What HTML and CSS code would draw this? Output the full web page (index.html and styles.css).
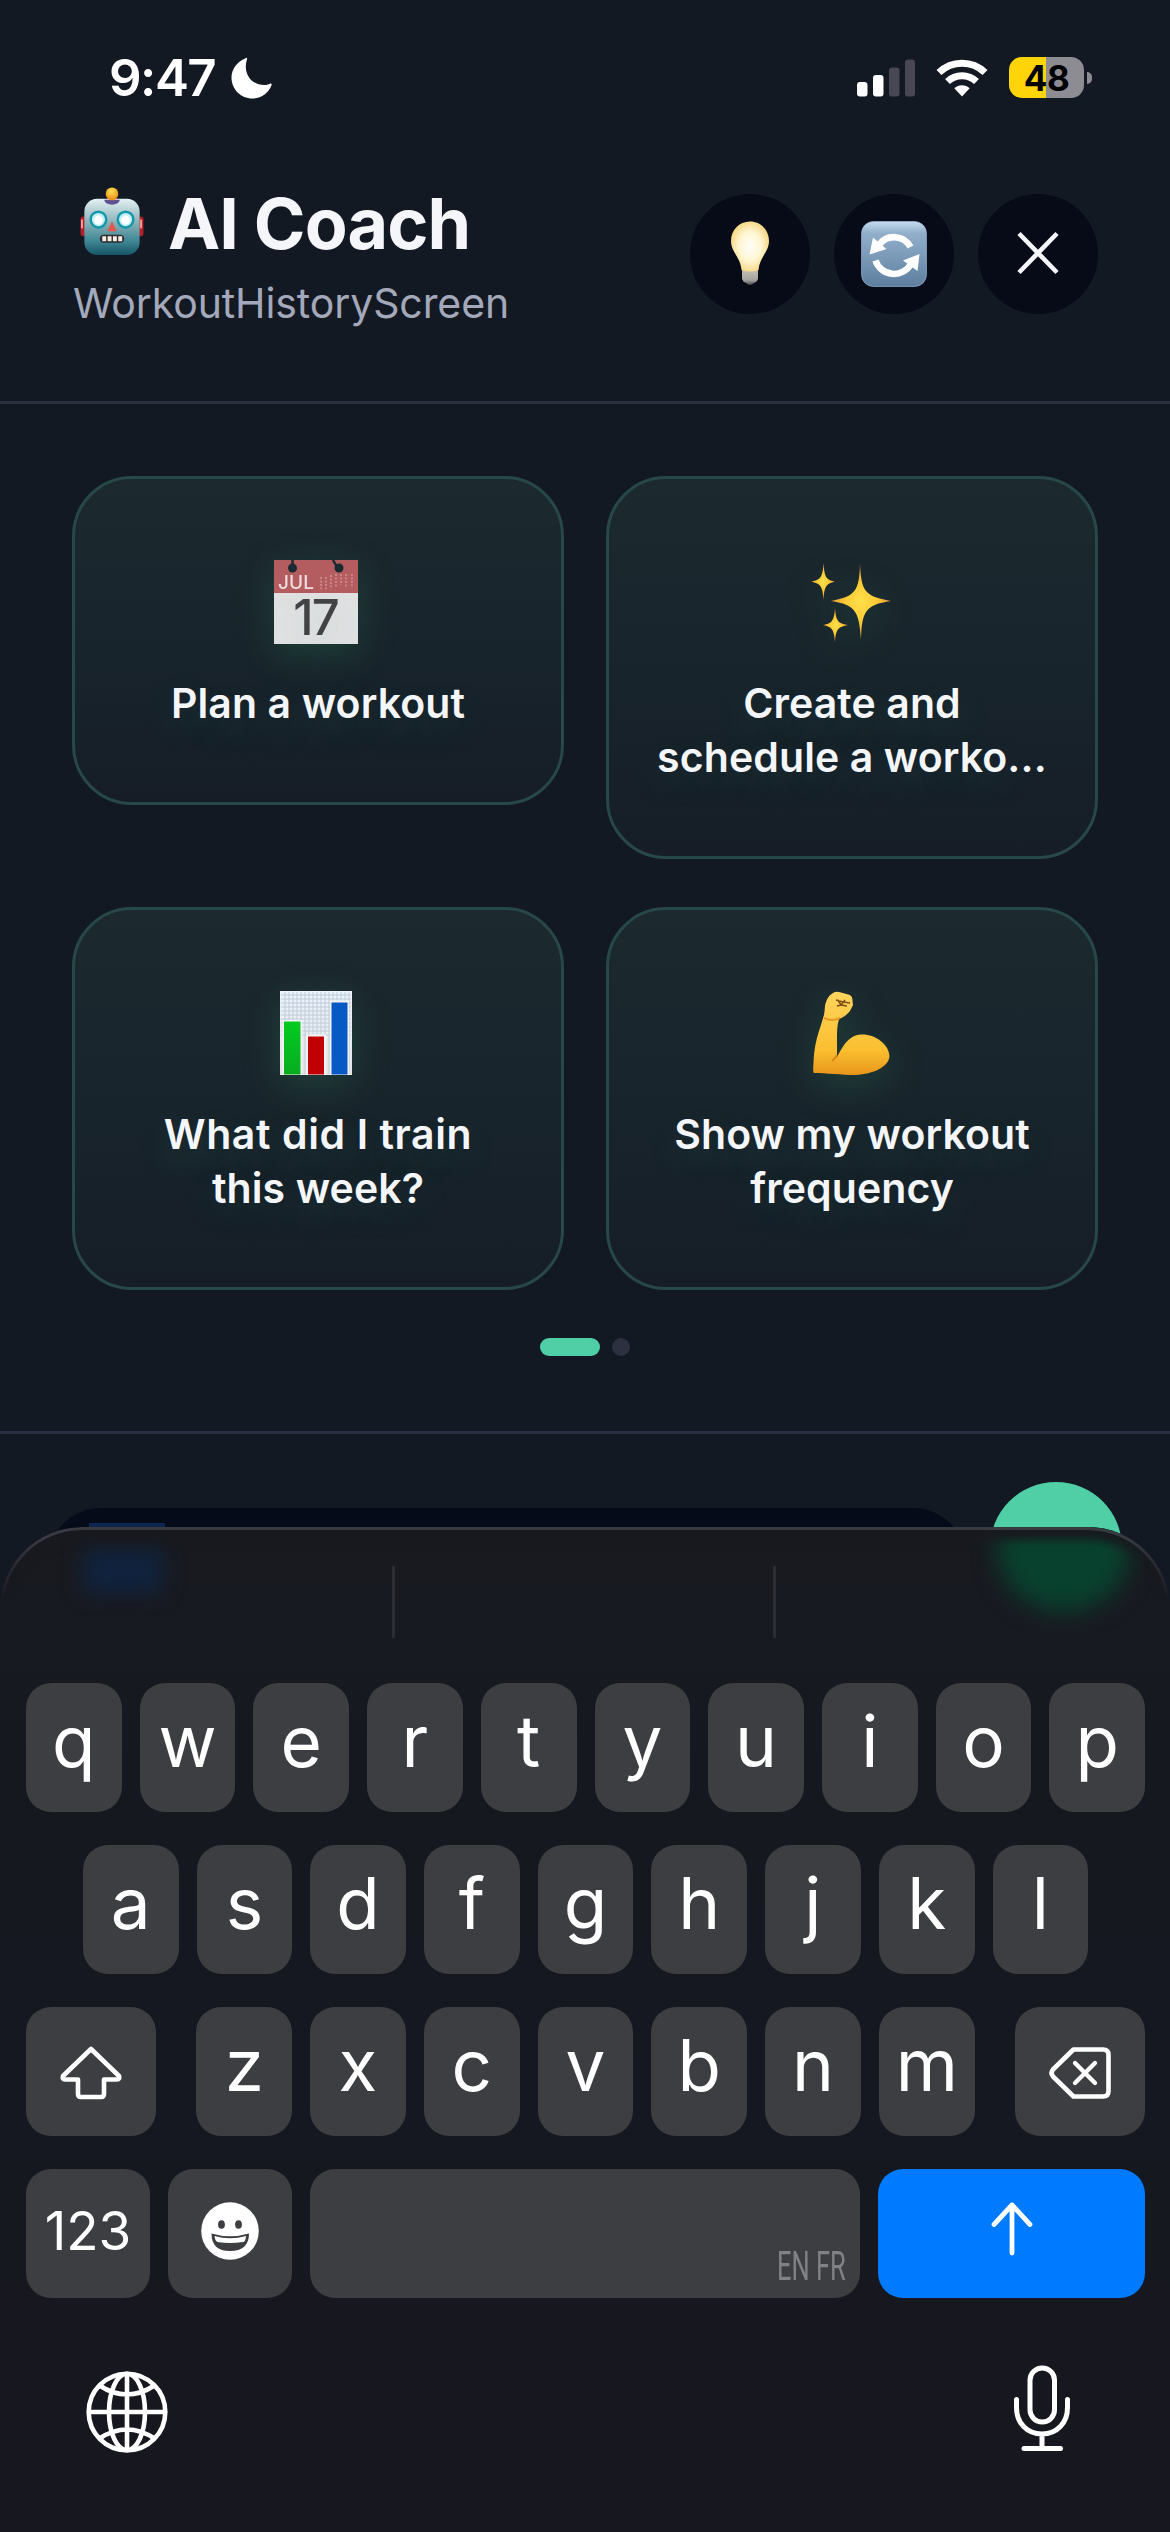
FILE: index.html
```html
<!DOCTYPE html>
<html lang="en">
<head>
<meta charset="utf-8">
<title>AI Coach</title>
<link rel="stylesheet" href="styles.css">
</head>
<body>
<div class="screen">
  <div class="status">
    <span class="time">9:47</span>
    <svg class="moon" width="41" height="42" viewBox="0 0 41 42"><path d="M14.600 1.200C15.600.4 16.400 1 16 2.200C11.500 15.500 20 28.500 34 28C36 27.900 37.500 27.300 39 26.700C40.300 26.300 41 27 40.500 28.300C37.500 36.300 30 41.500 21.500 41.500C9.800 41.500.5 32.300.5 20.500C.5 12.300 6 4.500 14.600 1.200Z" fill="#fff"/></svg>
    <div class="status-right">
      <svg width="58" height="38" viewBox="0 0 58 38"><rect x="0" y="23" width="10.500" height="14.500" rx="3" fill="#fff"/><rect x="16" y="16" width="10.500" height="21.500" rx="3" fill="#fff"/><rect x="32" y="8.500" width="10.500" height="29" rx="3" fill="#474854"/><rect x="48" y="0.500" width="10" height="37" rx="3" fill="#474854"/></svg>
      <svg class="wifi" width="52" height="38" viewBox="0 0 52 38"><g fill="none" stroke="#fff" stroke-width="7"><path d="M3 13.500A33 33 0 0 1 49 13.500"/><path d="M11.500 22.500A21 21 0 0 1 40.500 22.500"/></g><path d="M18.300 29.300A11 11 0 0 1 33.700 29.300L26 37.500Z" fill="#fff"/></svg>
      <div class="battery"><span>48</span></div>
      <div class="nub"></div>
    </div>
  </div>

  <header class="header">
    <div class="heading">
      <h1>
        <svg class="robot" width="64" height="69" viewBox="0 0 66 70" preserveAspectRatio="none">
          <defs><linearGradient id="rb" x1="0" y1="0" x2="0" y2="1"><stop offset="0" stop-color="#e2f1f3"/><stop offset=".4" stop-color="#8fb4ba"/><stop offset=".75" stop-color="#3f8795"/><stop offset="1" stop-color="#155466"/></linearGradient>
          <radialGradient id="ball" cx=".45" cy=".3" r=".7"><stop offset="0" stop-color="#ffe25a"/><stop offset="1" stop-color="#ed8a12"/></radialGradient></defs>
          <rect x="0.500" y="30" width="8" height="20" rx="3" fill="#b01f26"/><rect x="57.500" y="30" width="8" height="20" rx="3" fill="#b01f26"/>
          <rect x="1" y="33" width="2" height="9" fill="#f79a9a"/><rect x="62" y="33" width="2" height="9" fill="#f79a9a"/>
          <rect x="4.500" y="12" width="57" height="57" rx="13" fill="url(#rb)"/>
          <path d="M25 13A8 5 0 0 0 41 13Z" fill="#60528f"/><circle cx="33" cy="7" r="6.500" fill="url(#ball)"/>
          <circle cx="19" cy="33" r="8" fill="#c4eff5" stroke="#1597aa" stroke-width="2.500"/><circle cx="47" cy="33" r="8" fill="#c4eff5" stroke="#1597aa" stroke-width="2.500"/>
          <circle cx="19" cy="33.500" r="4.500" fill="#fff"/><circle cx="47" cy="33.500" r="4.500" fill="#fff"/>
          <path d="M33 35L38 45H28Z" fill="#e2564c"/>
          <rect x="20.500" y="48.500" width="25" height="8" rx="4" fill="#2b2c30"/><path d="M23 50h4v5h-4zM28.500 50h4v5h-4zM34 50h4v5h-4zM39.500 50h4v5h-4z" fill="#f6efe4"/>
        </svg>
        <span>AI Coach</span>
      </h1>
      <p class="subtitle">WorkoutHistoryScreen</p>
    </div>
    <div class="actions">
      <button class="round" aria-label="Tips">
        <svg width="40" height="66" viewBox="0 0 40 66"><defs><radialGradient id="bulb" cx=".5" cy=".5" r=".58"><stop offset="0" stop-color="#fffefa"/><stop offset=".5" stop-color="#fff6d2"/><stop offset="1" stop-color="#f3cf71"/></radialGradient><linearGradient id="sock" x1="0" y1="0" x2="0" y2="1"><stop offset="0" stop-color="#c9c2b5"/><stop offset=".7" stop-color="#a5a39f"/><stop offset="1" stop-color="#444"/></linearGradient></defs>
        <path d="M12 48H28V58Q27 61 24 62Q20 66 16 62Q13 61 12 58Z" fill="url(#sock)"/><path d="M20 .5C31 .5 39 9 39 20C39 31 29.500 36 28.500 49Q20 52 11.500 49C10.500 36 1 31 1 20C1 9 9 .5 20 .5Z" fill="url(#bulb)"/></svg>
      </button>
      <button class="round" aria-label="Refresh">
        <svg width="66" height="66" viewBox="0 0 66 66"><defs><linearGradient id="rf" x1="0" y1="0" x2="0" y2="1"><stop offset="0" stop-color="#c3dcf0"/><stop offset=".18" stop-color="#91afcb"/><stop offset="1" stop-color="#5d7f9f"/></linearGradient></defs>
        <rect x=".5" y=".5" width="65" height="65" rx="12" fill="url(#rf)" stroke="#a5c2da" stroke-opacity=".6"/>
        <g fill="none" stroke="#fff" stroke-width="6.500"><path d="M18 24A18.500 18.500 0 0 1 49.500 26"/><path d="M14.500 39.500A19.500 19.500 0 0 0 50 43"/></g>
        <path d="M12 16.500L8.500 33.500L25.500 28Z" fill="#fff"/><path d="M58.500 33L42 39.500L56.500 50Z" fill="#fff"/></svg>
      </button>
      <button class="round" aria-label="Close">
        <svg class="close" width="44" height="44" viewBox="0 0 44 44"><path d="M3 2.500L41 41.500M41 2.500L3 41.500" stroke="#f5f6fa" stroke-width="4.600" fill="none"/></svg>
      </button>
    </div>
  </header>

  <main class="quick">
    <div class="grid">
      <div class="card">
        <svg class="glow nudge" width="84" height="84" viewBox="0 0 84 84"><path d="M0 0H84V34H0Z" fill="#b45d60"/><path d="M0 33H84V84H0Z" fill="#e0e0e1"/><path d="M18.500 0V6M59 0L63 7" stroke="#182b30" stroke-width="2.500"/><circle cx="18.500" cy="8" r="4.500" fill="#182b30"/><circle cx="65" cy="8" r="4.500" fill="#182b30"/>
        <g stroke="#d58f90" stroke-width="1.600" stroke-dasharray="2 1.500"><path d="M47 17V29M52 17V29M57 15V29M62 14V28M67 14V25M72 14V27M78 14V26"/></g>
        <text x="4" y="28.500" class="cal-month">JUL</text><text x="41.500" y="75" class="cal-day" text-anchor="middle">17</text></svg>
        <p>Plan a workout</p>
      </div>
      <div class="card">
        <svg class="glow" width="84" height="84" viewBox="0 0 84 84"><defs><radialGradient id="st"><stop offset="0" stop-color="#ffe04b"/><stop offset=".5" stop-color="#fdcb35"/><stop offset="1" stop-color="#e59a39"/></radialGradient></defs><g fill="url(#st)"><path d="M50 4C51.500 31 54 36 81 41C55 45 52 51 51 80C49 51 46 45 21 41C46 36 49 31 50 4Z"/><path d="M13.500 3C14.500 17 16 20 25 21.500C16 24 14.500 26 13.500 40C12.500 26 11 24 1 21.500C11 20 12.500 17 13.500 3Z"/><path d="M25 48C26 61 28 63.500 38 65C28 67 26 69 25 82C24 69 22 67 13 65C22 63.500 24 61 25 48Z"/></g></svg>
        <p>Create and<br>schedule a worko...</p>
      </div>
      <div class="card">
        <svg class="glow nudge" width="84" height="84" viewBox="0 0 84 84"><defs><linearGradient id="cb" x1="0" y1="0" x2="0" y2="1"><stop offset="0" stop-color="#eef3fa"/><stop offset="1" stop-color="#e4e4e6"/></linearGradient><linearGradient id="gr" x1="0" y1="0" x2="0" y2="1"><stop offset="0" stop-color="#02cb20"/><stop offset="1" stop-color="#08ad20"/></linearGradient></defs><rect x="6" y="0" width="72" height="84" fill="url(#cb)"/><path d="M11 1V83M15 1V83M19 1V83M23 1V83M27 1V83M31 1V83M35 1V83M39 1V83M43 1V83M47 1V83M51 1V83M55 1V83M59 1V83M63 1V83M67 1V83M71 1V83M75 1V83M7 4H77M7 8H77M7 12H77M7 16H77M7 20H77M7 24H77M7 28H77M7 32H77M7 36H77M7 40H77M7 44H77" stroke="#b9c9d8" stroke-width=".9"/><path d="M8.500 29H28V84H8.500ZM32 43.500H52V84H32ZM56 9.500H75V84H56Z" fill="#f4f4f8"/><rect x="10" y="30.500" width="16.500" height="53" fill="url(#gr)"/><rect x="34" y="45.500" width="16" height="38" fill="#c00003"/><rect x="57.500" y="11.500" width="16" height="72" fill="#0759c4"/></svg>
        <p><span class="loose">What did I train</span><br>this week?</p>
      </div>
      <div class="card">
        <svg class="glow" width="84" height="84" viewBox="0 0 84 84"><defs><linearGradient id="arm" x1="0" y1="0" x2="0" y2="1"><stop offset="0" stop-color="#ffd45c"/><stop offset=".7" stop-color="#fbbf30"/><stop offset="1" stop-color="#e8951b"/></linearGradient></defs><path d="M4 82C2.500 80 3.500 76 3.500 71C4 59 6 49 9 40C11 34 12 31 13 27C14.500 23 14.500 20 15 15C16 9 19 4 23 2Q26 0 31 1.500L40 4Q43 6 42.500 10L43 14L40 20Q35 26 29 28C27 34 27 41 27 49V66C32 57 38 44 51 43.500C66 43 79 54 79.500 65C79 76 63 83 46 84C31 84 16 82 4 82Z" fill="url(#arm)"/><path d="M27 64Q25 68 22 70" fill="none" stroke="#d68519" stroke-width="2"/><path d="M14 27Q22 31 30 27" fill="none" stroke="#e59b20" stroke-width="2"/><path d="M26 9L33 11L40 12M28 9L31 14L37 15M27 15L31 14L35 9" fill="none" stroke="#805013" stroke-width="1.500"/></svg>
        <p>Show my workout<br>frequency</p>
      </div>
    </div>
    <div class="dots"><i class="on"></i><i></i></div>
  </main>

  <div class="composer">
    <div class="input"><span class="selection"></span></div>
    <div class="send"></div>
  </div>

  <section class="keyboard">
    <div class="shade shade-blue"></div>
    <div class="shade shade-green"></div>
    <div class="suggest"><i></i><i></i></div>
    <div class="rows">
      <div class="row"><b>q</b><b>w</b><b>e</b><b>r</b><b>t</b><b>y</b><b>u</b><b>i</b><b>o</b><b>p</b></div>
      <div class="row row-mid"><b>a</b><b>s</b><b>d</b><b>f</b><b>g</b><b>h</b><b>j</b><b>k</b><b>l</b></div>
      <div class="row">
        <b class="wide left"><svg width="62" height="54" viewBox="0 0 62 54"><path d="M31 3L59 30Q60 33.500 57 33.500H44V48Q44 51 41 51H21Q18 51 18 48V33.500H5Q2 33.500 3 30Z" fill="none" stroke="#fff" stroke-width="4.600" stroke-linejoin="round"/></svg></b>
        <b>z</b><b>x</b><b>c</b><b>v</b><b>b</b><b>n</b><b>m</b>
        <b class="wide right"><svg width="62" height="54" viewBox="0 0 62 54"><path d="M24.500 3.500H54Q59.500 3.500 59.500 9V45Q59.500 50.500 54 50.500H24.500L4 30.500Q1 27 4 23.500Z" fill="none" stroke="#fff" stroke-width="4.600" stroke-linejoin="round"/><path d="M26 17L46 37M46 17L26 37" stroke="#fff" stroke-width="4.300" stroke-linecap="round"/></svg></b>
      </div>
      <div class="row">
        <b class="num">123</b>
        <b class="emoji"><svg width="58" height="58" viewBox="0 0 58 58"><circle cx="29" cy="29" r="28.800" fill="#fff"/><ellipse cx="20.500" cy="22.500" rx="3.400" ry="4.300" fill="#3c3e42"/><ellipse cx="37.500" cy="22.500" rx="3.400" ry="4.300" fill="#3c3e42"/><path d="M10.500 31.500Q29 37 48 31.500Q48 49 29 49Q10.500 49 10.500 31.500Z" fill="#3c3e42"/><path d="M13.500 34Q29 38.500 45 34Q44.500 40 42 40Q29 42 16.500 40Q14 39 13.500 34Z" fill="#fff"/></svg></b>
        <b class="space"><span>EN FR</span></b>
        <b class="go"><svg width="44" height="54" viewBox="0 0 44 54"><path d="M22 51V3M4 22.500L22 3L40 22.500" fill="none" stroke="#fff" stroke-width="4.800" stroke-linecap="round" stroke-linejoin="round"/></svg></b>
      </div>
    </div>
    <div class="bottom">
      <svg width="82" height="82" viewBox="0 0 82 82"><g fill="none" stroke="#fff" stroke-width="4.600"><circle cx="41" cy="41" r="38.300"/><ellipse cx="41" cy="41" rx="18" ry="38.300"/><path d="M41 2.500V79.500M2.500 41H79.500M13.500 14.500Q41 32.500 68.500 14.500M13.500 67.500Q41 49.500 68.500 67.500"/></g></svg>
      <svg class="mic" width="58" height="87" viewBox="0 0 58 87"><g fill="none" stroke="#fff" stroke-width="5" stroke-linecap="round"><rect x="17" y="3" width="24.500" height="54" rx="12.250"/><path d="M3.500 34.500V42.500C3.500 58 14 69 29 69S54.500 58 54.500 42.500V34.500M29 69V83.500M11 83.500H47.500"/></g></svg>
    </div>
  </section>
</div>
</body>
</html>
```
FILE: styles.css
```css
* { box-sizing: border-box; }

body {
  margin: 0;
  background: #131923;
  font-family: Inter, "Liberation Sans", sans-serif;
  color: #f5f6fa;
}

h1, p { margin: 0; }

svg { display: block; flex: none; overflow: visible; }

.screen {
  position: relative;
  width: 1170px;
  height: 2532px;
  overflow: hidden;
  background: #131923;
}

/* status bar */
.status {
  display: flex;
  height: 140px;
  padding: 57px 78px 0 109px;
}
.time {
  width: 122px;
  font-size: 51px;
  font-weight: 600;
  line-height: 41px;
  letter-spacing: -1.500px;
  color: #fff;
}
.status-right {
  display: flex;
  align-items: center;
  height: 41px;
  margin-left: auto;
}
.wifi { margin: 0 21px; }
.battery {
  width: 75px;
  height: 41px;
  border-radius: 13px;
  background: linear-gradient(90deg, #ffd409 49%, #8d8c93 49%);
  color: #000;
  font-size: 35px;
  font-weight: 700;
  line-height: 42px;
  letter-spacing: -.5px;
  text-align: center;
}
.nub {
  width: 5px;
  height: 12px;
  margin-left: 3px;
  border-radius: 0 5px 5px 0;
  background: #8d8c93;
}

/* header */
.header {
  display: flex;
  justify-content: space-between;
  height: 264px;
  padding: 0 72px;
  border-bottom: 3px solid #2b3140;
}
.heading { padding-top: 42px; }
h1 {
  display: flex;
  gap: 24px;
  padding-left: 8px;
  font-size: 70px;
  font-weight: 700;
  line-height: 84px;
  letter-spacing: -.9px;
}
.robot { margin-top: 5px; }
.subtitle {
  margin-top: 10px;
  padding-left: 1px;
  font-size: 41px;
  line-height: 54px;
  letter-spacing: -.1px;
  color: #a3a8ba;
}
.actions {
  display: flex;
  gap: 24px;
  padding-top: 54px;
}
.round {
  display: flex;
  align-items: center;
  justify-content: center;
  width: 120px;
  height: 120px;
  padding: 0;
  border: 0;
  border-radius: 50%;
  background: #070b18;
}
.close { margin-bottom: 3px; }

/* suggestions */
.quick {
  height: 1030px;
  padding: 72px 72px 0;
  border-bottom: 3px solid #2a2e42;
}
.grid {
  display: grid;
  grid-template-columns: 1fr 1fr;
  gap: 48px 42px;
  align-items: start;
}
.card {
  display: flex;
  flex-direction: column;
  align-items: center;
  gap: 32px;
  padding: 81px 30px 72px;
  border: 3px solid #274848;
  border-radius: 60px;
  background: linear-gradient(#1c292f, #18242b 55%, #161d27);
  font-size: 41px;
  font-weight: 600;
  line-height: 54px;
  letter-spacing: .1px;
  text-align: center;
  white-space: nowrap;
  text-shadow: 0 12px 36px rgba(80, 208, 168, .16);
}
.loose { letter-spacing: .6px; }
.glow { filter: drop-shadow(0 10px 18px rgba(60, 190, 130, .18)); }
.nudge { margin-right: 4px; }
.cal-month { font-size: 19px; font-weight: 500; fill: #f0dcdc; }
.cal-day { font-size: 49px; font-weight: 500; fill: #434346; letter-spacing: -2px; }
.dots {
  display: flex;
  justify-content: center;
  gap: 12px;
  margin-top: 48px;
}
.dots i {
  width: 18px;
  height: 18px;
  border-radius: 9px;
  background: #2c3040;
}
.dots .on { width: 60px; background: #50cfa7; }

/* message composer */
.composer {
  display: flex;
  align-items: flex-end;
  gap: 24px;
  padding: 48px 48px 0;
}
.input {
  flex: 1;
  height: 106px;
  padding: 15px 41px;
  border-radius: 60px;
  background: #060b19;
}
.selection {
  display: block;
  width: 76px;
  height: 70px;
  background: #0c2750;
}
.send {
  width: 132px;
  height: 132px;
  border-radius: 50%;
  background: #50cfa7;
}

/* keyboard sheet lies over the composer */
.keyboard {
  position: absolute;
  inset: 1527px 0 0;
  overflow: hidden;
  border-radius: 82px 82px 0 0;
  background: linear-gradient(#181a1f, #181a22 12%, #15181f 22%, #151820 60%, #17181f 80%);
}
.keyboard::before {
  content: "";
  position: absolute;
  inset: 0 0 auto;
  z-index: 1;
  height: 110px;
  border: 3px solid #383941;
  border-bottom: 0;
  border-radius: 82px 82px 0 0;
  box-shadow: inset 0 10px 10px #181a1f;
  -webkit-mask-image: linear-gradient(#000 10%, transparent 65%);
  mask-image: linear-gradient(#000 10%, transparent 65%);
}
.shade { position: absolute; }
.shade-blue {
  top: 22px;
  left: 84px;
  width: 78px;
  height: 44px;
  background: #10233e;
  filter: blur(10px);
}
.shade-green {
  top: -40px;
  left: 998px;
  width: 132px;
  height: 124px;
  border-radius: 50%;
  background: #08422e;
  filter: blur(12px);
}
.suggest {
  display: flex;
  justify-content: center;
  gap: 378px;
  height: 156px;
  padding: 39px 3px 0 0;
}
.suggest i {
  width: 3px;
  height: 72px;
  background: #2b2d33;
}
.rows {
  display: flex;
  flex-direction: column;
  gap: 33px;
  padding: 0 25px 0 26px;
}
.row { display: flex; gap: 18px; }
.row-mid { padding: 0 56.800px; }
.row b {
  display: flex;
  flex: 1;
  justify-content: center;
  height: 129px;
  border-radius: 25px;
  background: #3c3e42;
  color: #fff;
  font-size: 71px;
  font-weight: 400;
  line-height: 116px;
}
.row b svg { align-self: center; }
.row .wide { flex: none; width: 129.700px; }
.row .left { margin-right: 22.700px; }
.row .right { margin-left: 22.700px; }
.wide svg { margin-top: 3px; }
.row .num, .row .emoji { flex: none; width: 124px; }
.row .num { font-size: 53px; line-height: 124px; }
.row .emoji svg { margin-bottom: 5px; }
.row .space {
  align-items: flex-end;
  justify-content: flex-end;
  padding: 0 14px 10px 0;
}
.space span {
  font-family: Roboto, sans-serif;
  font-size: 41px;
  font-weight: 400;
  line-height: 44px;
  color: #808286;
  transform: scaleX(.62);
  transform-origin: right;
}
.row .go {
  flex: none;
  width: 267px;
  background: #007aff;
}
.row .go svg { margin-bottom: 10px; }
.bottom {
  display: flex;
  justify-content: space-between;
  padding: 73px 99px 0 86px;
}
.mic { margin-top: -6px; }
```
